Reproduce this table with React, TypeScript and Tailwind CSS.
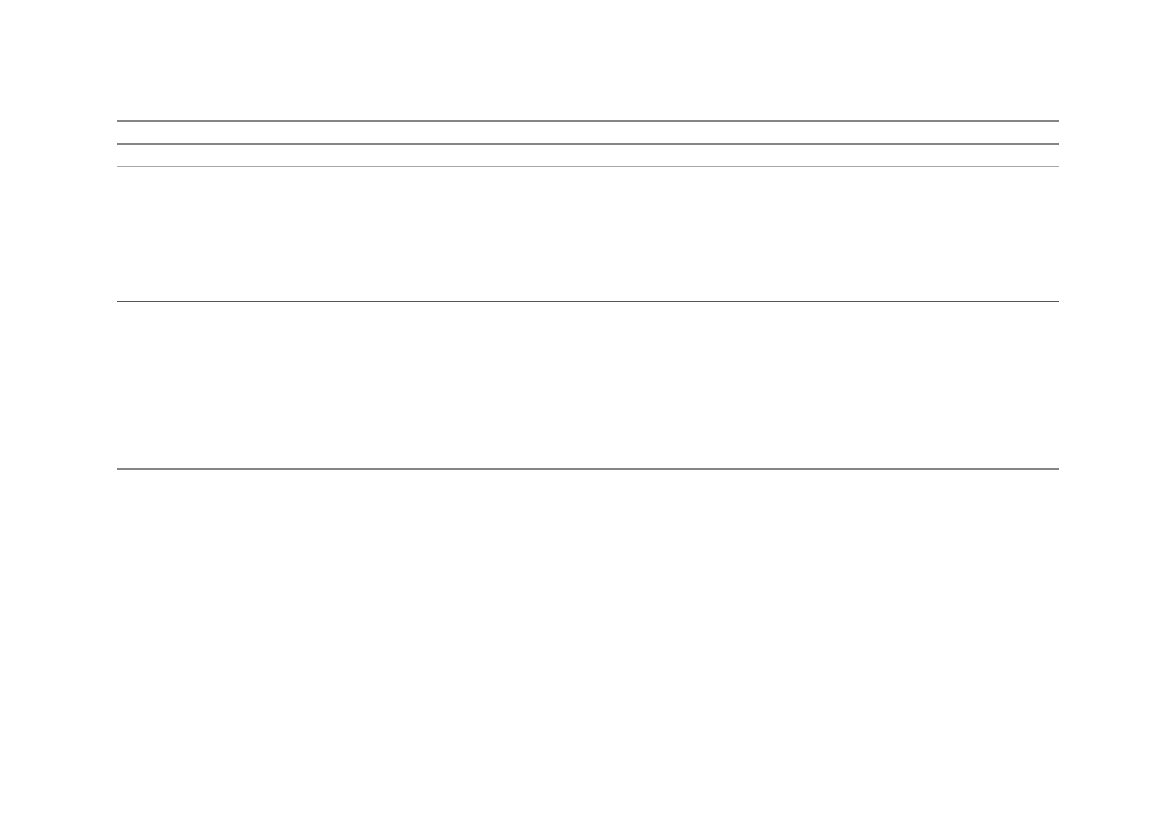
export default function App() {
  const cols = ["w-[164px]", "w-[81px]", "flex-1"];
  const Row = ({ h, border }: { h: string; border: string }) => (
    <div className={`flex ${h}`}>
      {cols.map((c, i) => (
        <div key={i} className={`${c} ${border}`} />
      ))}
    </div>
  );
  return (
    <div className="w-[1169px] h-[827px] bg-white font-['Liberation_Sans',sans-serif]">
      <div className="pt-[120px] pl-[117px] w-[1059px]">
        <div className="border-t-2 border-[#858585]">
          <Row h="h-[23px]" border="border-b-2 border-[#858585]" />
          <Row h="h-[22px]" border="border-b border-[#a8a8a8]" />
          <Row h="h-[135px]" border="border-b border-[#555555]" />
          <Row h="h-[168px]" border="border-b-2 border-[#858585]" />
        </div>
      </div>
    </div>
  );
}
